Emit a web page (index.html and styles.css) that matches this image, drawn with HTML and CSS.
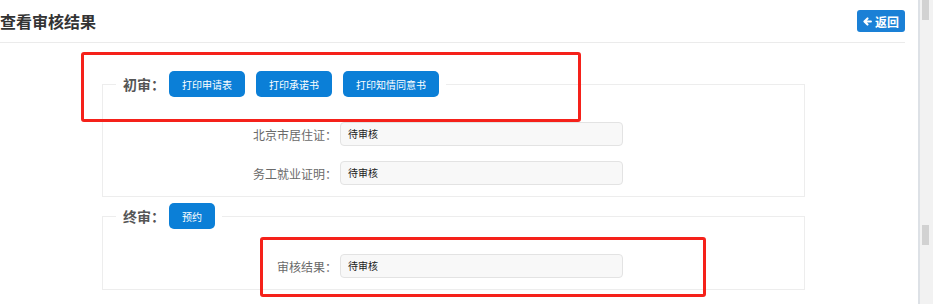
FILE: index.html
```html
<!DOCTYPE html>
<html lang="zh-CN">

<head>
  <meta charset="UTF-8">
  <meta name="viewport" content="width=device-width, initial-scale=1.0">
  <title>查看审核结果</title>
  <link rel="stylesheet" href="styles.css">
</head>

<body>
  <div class="layout">
    <div class="page">
      <div class="header">
        <h1 class="title">查看审核结果</h1>
        <button class="btn-back">
          <svg class="icon" viewBox="0 0 10 10" width="9" height="9">
            <path d="M5 1.6L1.6 5L5 8.4M1.8 5H8.8" fill="none" stroke="currentColor" stroke-width="2.3" stroke-linecap="round" stroke-linejoin="round"/>
          </svg>
          返回
        </button>
      </div>

      <fieldset class="group group-first">
        <legend class="group-legend">
          <span class="group-title">初审：</span>
          <button class="btn">打印申请表</button>
          <button class="btn">打印承诺书</button>
          <button class="btn">打印知情同意书</button>
        </legend>
        <div class="rows">
          <div class="row">
            <label class="row-label">北京市居住证：</label>
            <div class="row-value">待审核</div>
          </div>
          <div class="row">
            <label class="row-label">务工就业证明：</label>
            <div class="row-value">待审核</div>
          </div>
        </div>
      </fieldset>

      <fieldset class="group group-final">
        <legend class="group-legend">
          <span class="group-title">终审：</span>
          <button class="btn">预约</button>
        </legend>
        <div class="rows">
          <div class="row">
            <label class="row-label">审核结果：</label>
            <div class="row-value">待审核</div>
          </div>
        </div>
      </fieldset>

      <!-- annotation boxes drawn over the page -->
      <div class="mark mark-first"></div>
      <div class="mark mark-final"></div>
    </div>

    <div class="scrollbar">
      <div class="thumb"></div>
      <div class="thumb thumb-low"></div>
    </div>
  </div>
</body>

</html>
```

FILE: styles.css
```css
body {
  margin: 0;
  font-family: "Noto Sans CJK SC", "Liberation Sans", sans-serif;
  background-color: #fff;
  color: #333;
}

.layout {
  display: flex;
  height: 304px;
  overflow: hidden;
}

.page {
  position: relative;
  width: 905px;
  margin-right: 13px;
}

.header {
  display: flex;
  justify-content: space-between;
  align-items: center;
  height: 42px;
  border-bottom: 1px solid #ebebeb;
}

.title {
  margin: 0;
  font-size: 16px;
  font-weight: bold;
  color: #333;
}

.btn-back {
  display: flex;
  align-items: center;
  gap: 3px;
  height: 22px;
  padding: 0 6px;
  border: none;
  border-radius: 3px;
  background-color: #1a80d6;
  color: #fff;
  font-family: inherit;
  font-size: 12px;
  font-weight: bold;
}

.group {
  box-sizing: border-box;
  width: 703px;
  margin: 0 0 0 102px;
  padding: 0 0 11px;
  border: 1px solid #ededed;
}

.group-first {
  margin-top: 28px;
}

.group-final {
  margin-top: 6px;
}

.group-legend {
  display: flex;
  align-items: center;
  gap: 11px;
  margin-left: 13px;
  padding: 0 7px;
}

.group-title {
  margin-right: -7px;
  font-size: 14px;
  font-weight: bold;
  color: #555;
}

.btn {
  height: 26px;
  padding: 0 13px;
  border: none;
  border-radius: 5px;
  background-color: #0b7fd7;
  color: #fff;
  font-family: inherit;
  font-size: 10px;
}

.rows {
  display: flex;
  flex-direction: column;
  gap: 15px;
  padding-top: 25px;
}

.row {
  display: grid;
  grid-template-columns: 234px 283px;
  column-gap: 3px;
  align-items: center;
}

.row-label {
  text-align: right;
  font-size: 12px;
  color: #6a6a6a;
}

.row-value {
  box-sizing: border-box;
  height: 24px;
  padding-left: 7px;
  border: 1px solid #e3e3e3;
  border-radius: 4px;
  background-color: #f8f8f8;
  font-size: 10px;
  line-height: 22px;
  color: #222;
}

.mark {
  position: absolute;
  box-sizing: border-box;
  border: 3px solid #f5211a;
  border-radius: 3px;
}

.mark-first {
  left: 81px;
  top: 52px;
  width: 500px;
  height: 70px;
}

.mark-final {
  left: 260px;
  top: 237px;
  width: 446px;
  height: 60px;
}

.scrollbar {
  box-sizing: border-box;
  width: 15px;
  border-left: 2px solid #dde1e6;
  background-color: #f2f2f2;
}

.thumb {
  width: 7px;
  height: 20px;
  margin-left: 2px;
  background-color: #d2d2d2;
}

.thumb-low {
  margin-top: 205px;
}
```
